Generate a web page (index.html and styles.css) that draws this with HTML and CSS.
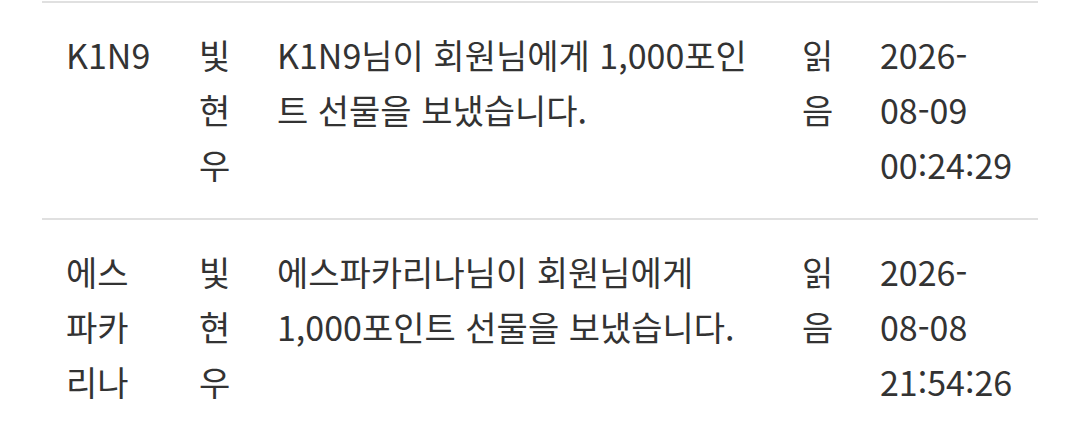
FILE: index.html
```html
<!DOCTYPE html>
<html lang="ko">
<head>
<meta charset="utf-8">
<link rel="stylesheet" href="styles.css">
</head>
<body>
<div class="list">
  <div class="row">
    <div class="cell nick">K1N9</div>
    <div class="cell to">빛현우</div>
    <div class="cell msg">K1N9님이 회원님에게 1,000포인트 선물을 보냈습니다.</div>
    <div class="cell state">읽음</div>
    <div class="cell date">2026-08-09 00:24:29</div>
  </div>
  <div class="row">
    <div class="cell nick">에스파카리나</div>
    <div class="cell to">빛현우</div>
    <div class="cell msg">에스파카리나님이 회원님에게 1,000포인트 선물을 보냈습니다.</div>
    <div class="cell state">읽음</div>
    <div class="cell date">2026-08-08 21:54:26</div>
  </div>
</div>
</body>
</html>
```
FILE: styles.css
```css
html, body {
  margin: 0;
  padding: 0;
  background: #ffffff;
}
body {
  font-family: "Noto Sans CJK KR", "Noto Sans", sans-serif;
  font-size: 34px;
  line-height: 55px;
  color: #333333;
}
.list {
  margin-left: 42px;
  width: 996px;
  padding-top: 1px;
}
.row {
  display: grid;
  grid-template-columns: 133px 78px 525px 78px 136px;
  border-top: 2px solid #e0e0e0;
  padding: 24px 0 26px 24px;
}
.row:last-child {
  padding-bottom: 30px;
}
.cell {
  word-break: normal;
  overflow-wrap: anywhere;
}
.nick {
  padding-right: 43px;
}
.to,
.state {
  padding-right: 36px;
}
.msg {
  padding-right: 36px;
}
```
